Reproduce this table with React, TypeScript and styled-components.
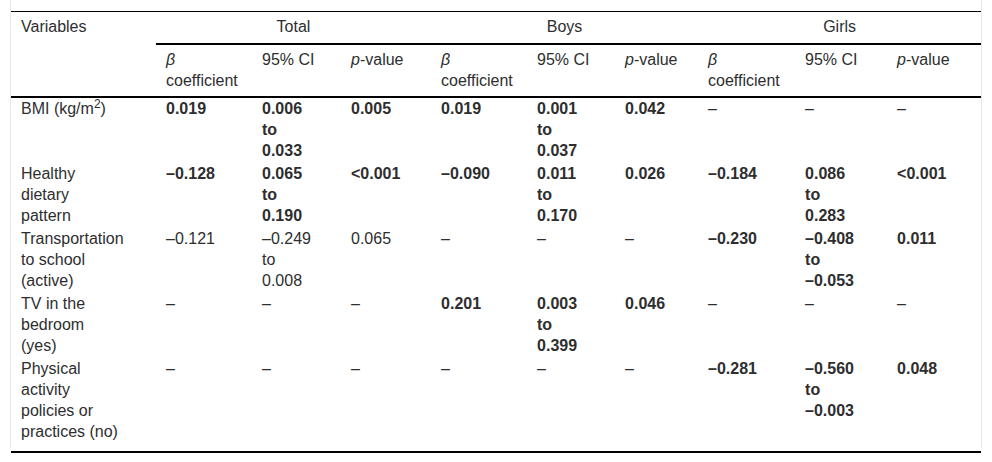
import React, { JSX } from "react";
import styled, { createGlobalStyle } from "styled-components";

const GlobalStyle = createGlobalStyle`
   html, body {
      margin: 0;
      padding: 0;
      background: #fff;
   }
   body {
      font-family: "Liberation Sans", Arial, sans-serif;
      font-size: 16px;
      color: #2e2e2e;
   }
`;

const Frame = styled.div`
   width: 970px;
   margin-left: 10px;
   padding: 11px 0 4px;
   border-left: 1px solid #e6e6e6;
   border-right: 1px solid #e6e6e6;
`;

const Table = styled.table`
   width: 970px;
   table-layout: fixed;
   border-collapse: separate;
   border-spacing: 0;
   border-top: 1px solid #000;
   line-height: 21px;
`;

const FootRule = styled.div`
   width: 970px;
   margin: 3px 0 0 11px;
   border-top: 2px solid #000;
`;

const HeadCell = styled.th<{ $group?: boolean; $ruled?: boolean }>`
   font-weight: 400;
   vertical-align: top;
   text-align: ${({ $group }) => ($group ? "center" : "left")};
   padding: ${({ $group }) => ($group ? "4px 10px 6px" : "4px 20px 5px 10px")};
   border-bottom: ${({ $group, $ruled }) =>
      $group || $ruled ? "2px solid #000" : "none"};
`;

const Cell = styled.td<{ $sig?: boolean }>`
   vertical-align: top;
   padding: 0 20px 2px 10px;
   font-weight: ${({ $sig }) => ($sig ? 700 : 400)};
   white-space: nowrap;
`;

const LabelCell = styled.td`
   vertical-align: top;
   padding: 0 35px 2px 10px;
`;

const Line = styled.span`
   display: block;
`;

const NoWrap = styled.span`
   white-space: nowrap;
`;

const Sup = styled.sup`
   font-size: 0.75em;
   line-height: 0;
`;

type Group = {
   beta: string;
   lo: string;
   hi: string;
   p: string;
   sig?: boolean;
} | null;

type Row = {
   label: React.ReactNode;
   total: Group;
   boys: Group;
   girls: Group;
};

const widths = [145, 96, 89, 90, 96, 88, 83, 97, 92, 94];

const rows: Row[] = [
   {
      label: (
         <>
            BMI (kg/m<Sup>2</Sup>)
         </>
      ),
      total: { beta: "0.019", lo: "0.006", hi: "0.033", p: "0.005", sig: true },
      boys: { beta: "0.019", lo: "0.001", hi: "0.037", p: "0.042", sig: true },
      girls: null,
   },
   {
      label: "Healthy dietary pattern",
      total: { beta: "–0.128", lo: "0.065", hi: "0.190", p: "<0.001", sig: true },
      boys: { beta: "–0.090", lo: "0.011", hi: "0.170", p: "0.026", sig: true },
      girls: { beta: "–0.184", lo: "0.086", hi: "0.283", p: "<0.001", sig: true },
   },
   {
      label: "Transportation to school (active)",
      total: { beta: "–0.121", lo: "–0.249", hi: "0.008", p: "0.065" },
      boys: null,
      girls: { beta: "–0.230", lo: "–0.408", hi: "–0.053", p: "0.011", sig: true },
   },
   {
      label: "TV in the bedroom (yes)",
      total: null,
      boys: { beta: "0.201", lo: "0.003", hi: "0.399", p: "0.046", sig: true },
      girls: null,
   },
   {
      label: "Physical activity policies or practices (no)",
      total: null,
      boys: null,
      girls: { beta: "–0.281", lo: "–0.560", hi: "–0.003", p: "0.048", sig: true },
   },
];

function GroupCells({ g }: { g: Group }): JSX.Element {
   if (!g) {
      return (
         <>
            <Cell>–</Cell>
            <Cell>–</Cell>
            <Cell>–</Cell>
         </>
      );
   }
   return (
      <>
         <Cell $sig={g.sig}>{g.beta}</Cell>
         <Cell $sig={g.sig}>
            <Line>{g.lo}</Line>
            <Line>to</Line>
            <Line>{g.hi}</Line>
         </Cell>
         <Cell $sig={g.sig}>{g.p}</Cell>
      </>
   );
}

function SubHeads(): JSX.Element {
   return (
      <>
         <HeadCell $ruled>
            <i>β</i> coefficient
         </HeadCell>
         <HeadCell $ruled>
            <NoWrap>95% CI</NoWrap>
         </HeadCell>
         <HeadCell $ruled>
            <NoWrap>
               <i>p</i>-value
            </NoWrap>
         </HeadCell>
      </>
   );
}

function App(): JSX.Element {
   return (
      <>
         <GlobalStyle />
         <Frame>
            <Table>
               <colgroup>
                  {widths.map((w, idx) => (
                     <col key={idx} style={{ width: `${w}px` }} />
                  ))}
               </colgroup>
               <thead>
                  <tr>
                     <HeadCell rowSpan={2} $ruled>
                        Variables
                     </HeadCell>
                     <HeadCell colSpan={3} $group>
                        Total
                     </HeadCell>
                     <HeadCell colSpan={3} $group>
                        Boys
                     </HeadCell>
                     <HeadCell colSpan={3} $group>
                        Girls
                     </HeadCell>
                  </tr>
                  <tr>
                     <SubHeads />
                     <SubHeads />
                     <SubHeads />
                  </tr>
               </thead>
               <tbody>
                  {rows.map((row, idx) => (
                     <tr key={idx}>
                        <LabelCell>{row.label}</LabelCell>
                        <GroupCells g={row.total} />
                        <GroupCells g={row.boys} />
                        <GroupCells g={row.girls} />
                     </tr>
                  ))}
               </tbody>
            </Table>
         </Frame>
         <FootRule />
      </>
   );
}

export default App;
